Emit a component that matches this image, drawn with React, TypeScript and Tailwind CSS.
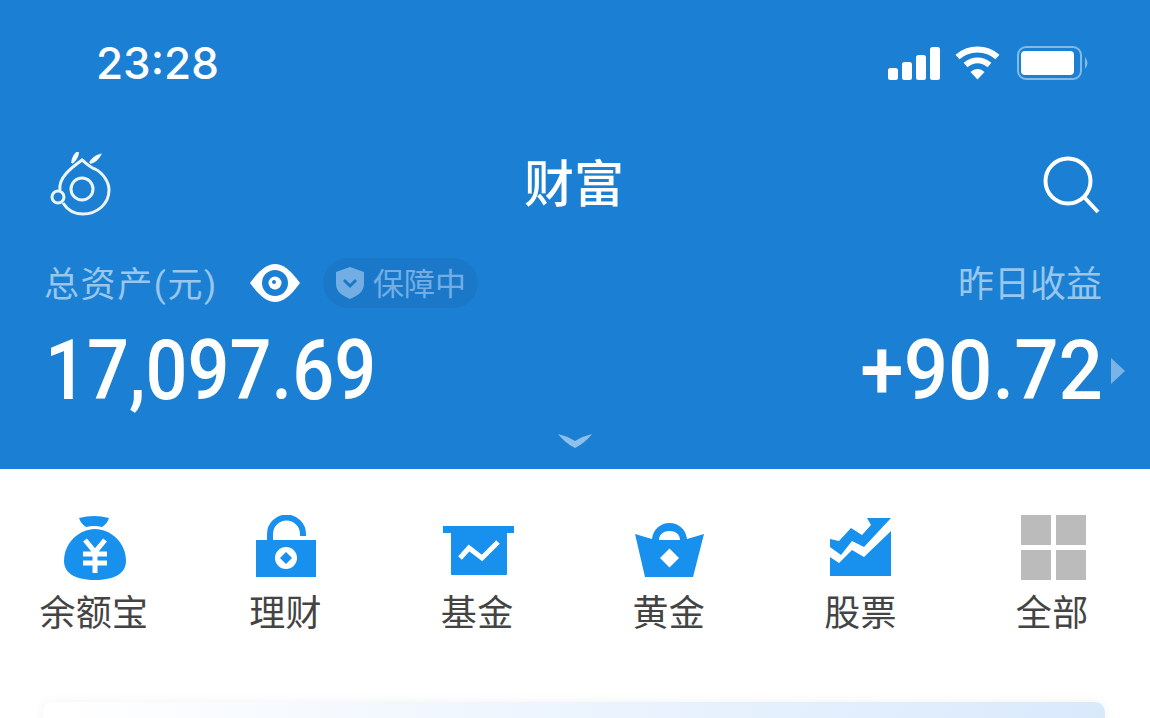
import React from 'react';

const FONT = "font-['Roboto','Noto_Sans_CJK_SC',sans-serif]";

const MoneyBag = () => (
  <svg width="64" height="66" viewBox="0 0 64 66">
    <path d="M16 3 Q31 -1 46 3 Q44 9 39 12 Q31 10 23 12 Q18 9 16 3Z" fill="#1890ee" />
    <path d="M32 14 C48 14 63 28 63 46 C63 59 50 65 32 65 C14 65 1 59 1 46 C1 28 16 14 32 14Z" fill="#1890ee" />
    <path d="M22 25 L32 37 L42 25 M20 39 H44 M20 48 H44 M32 37 V58" fill="none" stroke="#fff" strokeWidth="5" />
  </svg>
);

const Lock = () => (
  <svg width="62" height="62" viewBox="0 0 62 62">
    <path d="M15 26 V19 A16.5 16.5 0 0 1 48 19 V21" fill="none" stroke="#1890ee" strokeWidth="6" />
    <rect x="1" y="25" width="60" height="37" fill="#1890ee" />
    <circle cx="31" cy="43" r="11" fill="#fff" />
    <path d="M31 37 L37 43 L31 49 L25 43Z" fill="#1890ee" />
  </svg>
);

const Fund = () => (
  <svg width="71" height="50" viewBox="0 0 71 50">
    <rect x="0" y="0" width="71" height="7" fill="#1890ee" />
    <rect x="8" y="6" width="56" height="43" rx="1" fill="#1890ee" />
    <path d="M17 32 L26 22 L39 32 L55 16" fill="none" stroke="#fff" strokeWidth="5" />
  </svg>
);

const Basket = () => (
  <svg width="70" height="54" viewBox="0 0 70 54">
    <path d="M0 11 L17 16 C18 6 26 0 34.5 0 C43 0 51 6 52 16 L69 11 L58 54 H10Z" fill="#1890ee" />
    <path d="M24 17 C24 11 29 8 34.5 8 C40 8 45 11 45 17Z" fill="#fff" />
    <path d="M34.5 25.5 L44 35 L34.5 44.5 L25 35Z" fill="#fff" />
  </svg>
);

const Stocks = () => (
  <svg width="62" height="60" viewBox="0 0 62 60">
    <path d="M0 22 L9 24 L21 11 L32 18 L41 8 L37 1 H61 L34 30 L22 24 L11 38 L0 30Z" fill="#1890ee" />
    <path d="M0 40 L9 46 L22 33 L34 40 L61 14 V59 H0Z" fill="#1890ee" />
  </svg>
);

const AllGrid = () => (
  <div className="grid grid-cols-2 gap-[5px] w-[65px] h-[65px]">
    <div className="bg-[#bbbbbb]" />
    <div className="bg-[#bbbbbb]" />
    <div className="bg-[#bbbbbb]" />
    <div className="bg-[#bbbbbb]" />
  </div>
);

const StatusIcons = () => (
  <div className="flex items-center">
    <svg width="52" height="33" viewBox="0 0 52 33" fill="#fff">
      <rect x="0" y="21" width="10" height="12" rx="2.5" />
      <rect x="14" y="15" width="10" height="18" rx="2.5" />
      <rect x="28" y="8" width="10" height="25" rx="2.5" />
      <rect x="42" y="0" width="10" height="33" rx="2.5" />
    </svg>
    <svg className="ml-[15px]" width="45" height="34" viewBox="0 0 45 34">
      <path d="M2.5 11 C14 1 31 1 42.5 11" fill="none" stroke="#fff" strokeWidth="6" />
      <path d="M10.5 19 C18 13 27 13 34.5 19" fill="none" stroke="#fff" strokeWidth="6" />
      <path d="M15.5 26 C20 22 25 22 29.5 26 L22.5 33.5Z" fill="#fff" />
    </svg>
    <svg className="ml-[17px]" width="72" height="34" viewBox="0 0 72 34">
      <rect x="1" y="1" width="63" height="32" rx="8" fill="none" stroke="#fff" strokeOpacity="0.45" strokeWidth="2" />
      <rect x="4" y="5" width="53" height="24" rx="4" fill="#fff" />
      <path d="M68 11 Q73 17 68 23Z" fill="#fff" fillOpacity="0.45" />
    </svg>
  </div>
);

const Logo = () => (
  <svg width="62" height="66" viewBox="0 0 62 66" fill="none" stroke="#fff" strokeWidth="3" strokeOpacity="0.92">
    <path d="M11 38 C9 26 22 16 33 8 C38 12 42 16 46 17 C54 21 60 30 60 38 C60 52 48 62 34 62 C26 62 19 59 14 51" />
    <circle cx="33" cy="37" r="11" />
    <circle cx="9" cy="45" r="6" />
    <path d="M23 11 Q24 3 29 0 Q29 6 23 11" strokeWidth="2" fill="#fff" />
    <path d="M41 11 Q44 5 51 3 Q48 9 41 11" strokeWidth="2" fill="#fff" />
  </svg>
);

const Eye = () => (
  <svg width="50" height="38" viewBox="0 0 50 38">
    <path d="M0 19 C10 5 18 0 25 0 C32 0 40 5 50 19 C40 33 32 38 25 38 C18 38 10 33 0 19Z" fill="#fff" />
    <circle cx="25" cy="19" r="13" fill="#1b80d3" />
    <circle cx="25" cy="19" r="6.5" fill="#fff" />
    <circle cx="24" cy="18" r="2" fill="#1b80d3" />
  </svg>
);

const Shield = () => (
  <svg width="30" height="32" viewBox="0 0 30 32">
    <path d="M15 0 L29 5 V17 C29 25 22 29 15 32 C8 29 1 25 1 17 V5Z" fill="#72aee3" />
    <path d="M9 13 L15 19 L21 13" fill="none" stroke="#1b78c9" strokeWidth="3" />
  </svg>
);

const entries = [
  { label: '余额宝', icon: <MoneyBag />, slot: 'pt-0' },
  { label: '理财', icon: <Lock />, slot: 'pt-0' },
  { label: '基金', icon: <Fund />, slot: 'pt-[11px]' },
  { label: '黄金', icon: <Basket />, slot: 'pt-[8px]' },
  { label: '股票', icon: <Stocks />, slot: 'pt-[2px]' },
  { label: '全部', icon: <AllGrid />, slot: 'pt-0' },
];

export default function App() {
  return (
    <div className={`w-[1150px] h-[718px] overflow-hidden bg-white ${FONT}`}>
      <header className="h-[469px] bg-[#1b80d3] flex flex-col text-white">
        <div className="flex items-center justify-between pt-[40px] pl-[96px] pr-[61px] h-[86px]">
          <span className="text-[44px] leading-[46px] font-medium font-['Inter',sans-serif]">23:28</span>
          <StatusIcons />
        </div>
        <div className="flex items-center justify-between pl-[49px] pr-[50px] mt-[64px] h-[70px]">
          <Logo />
          <span className="text-[50px] font-medium leading-none mr-[5px]">财富</span>
          <svg width="58" height="58" viewBox="0 0 58 58" fill="none" stroke="#fff" strokeWidth="4">
            <circle cx="26" cy="25" r="22.5" />
            <path d="M42 41 L56 56" />
          </svg>
        </div>
        <div className="flex items-center justify-between pl-[46px] pr-[48px] mt-[38px] h-[50px]">
          <div className="flex items-center">
            <span className="text-[35px] leading-none tracking-[1.6px] text-[#98c6ec] w-[206px] -ml-[2px] pt-[4px]">总资产(元)</span>
            <Eye />
            <div className="ml-[23px] w-[155px] h-[50px] rounded-full bg-[#1b78c9] flex items-center gap-[8px] pl-[12px]">
              <Shield />
              <span className="text-[31px] leading-none text-[#72aee3] pt-[3px]">保障中</span>
            </div>
          </div>
          <span className="text-[36px] leading-none text-[#98c6ec] pt-[4px]">昨日收益</span>
        </div>
        <div className="flex items-center justify-between pl-[45px] pr-[25px] mt-[21px] h-[84px]">
          <span className="text-[84px] leading-none font-medium origin-left scale-x-[0.88]">17,097.69</span>
          <div className="flex items-center gap-[8px]">
            <span className="text-[84px] leading-none font-medium origin-right scale-x-[0.93]">+90.72</span>
            <svg width="14" height="26" viewBox="0 0 14 26">
              <path d="M0 0 L14 13 L0 26Z" fill="#7ab4e6" />
            </svg>
          </div>
        </div>
        <div className="flex justify-center mt-[20px]">
          <svg width="36" height="16" viewBox="0 0 36 16">
            <path d="M1 1 Q10 3 18 8 Q26 3 35 1 Q28 10 18 15 Q8 10 1 1Z" fill="#8ec0ea" />
          </svg>
        </div>
      </header>

      <nav className="grid grid-cols-6 w-[1150px] -ml-[2px] pt-[46px]">
        {entries.map(item => (
          <div key={item.label} className="flex flex-col items-center">
            <div className={`h-[66px] ml-[2px] flex items-start justify-center ${item.slot}`}>{item.icon}</div>
            <span className="mt-[11px] text-[36px] tracking-[0.3px] leading-[44px] text-[#444444]">{item.label}</span>
          </div>
        ))}
      </nav>

      <div className="ml-[43px] mr-[45px] mt-[66px] h-[40px] rounded-t-[10px] bg-gradient-to-r from-[#ffffff] to-[#d9e9fc] shadow-[0_0_12px_rgba(0,0,0,0.05)]" />
    </div>
  );
}
